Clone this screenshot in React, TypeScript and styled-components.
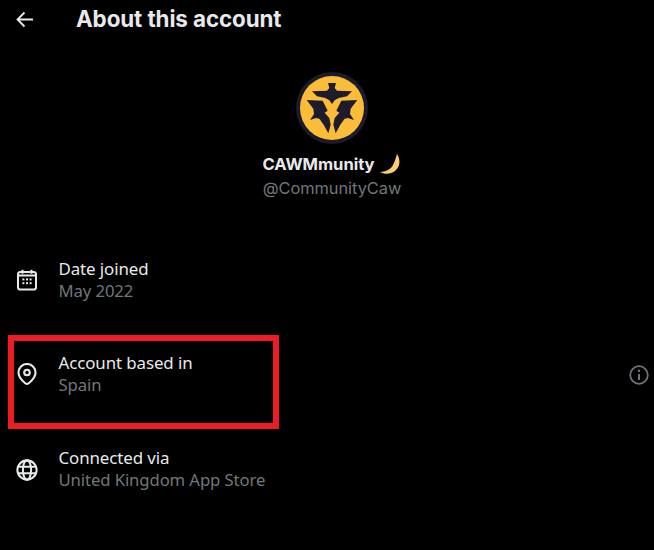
import React from "react";
import styled, { createGlobalStyle } from "styled-components";

const Global = createGlobalStyle`
  html, body { margin: 0; padding: 0; background: #000; }
  body { width: 654px; height: 550px; overflow: hidden; font-family: "Noto Sans", "Open Sans", sans-serif; }
`;
const Page = styled.div`
  width: 654px; height: 550px; background: #000; color: #e7e9ea; display: flex; flex-direction: column;
`;
const Header = styled.header`
  height: 38px; display: flex; align-items: center; padding-left: 15px; gap: 42px;
`;
const BackButton = styled.span`
  width: 19px; height: 19px; display: flex; color: #e7e9ea;
`;
const Title = styled.h1`
  margin: 0; font: 700 22.4px/38px Inter, sans-serif; color: #e7e9ea; letter-spacing: -0.1px;
`;
const Profile = styled.section`
  margin-top: 34px; display: flex; flex-direction: column; align-items: center; padding-left: 10px;
`;
const NameRow = styled.div`
  margin-top: 8px; height: 24px; display: flex; align-items: center; gap: 6px;
  font: 700 16.6px/24px Inter, sans-serif; color: #e7e9ea; letter-spacing: -0.05px;
`;
const Handle = styled.div`
  font: 400 16.4px/24px Inter, sans-serif; color: #71767b; letter-spacing: -0.05px;
`;
const List = styled.section`
  margin-top: 58px; display: flex; flex-direction: column;
`;
const Row = styled.div<{ $h: number }>`
  position: relative; height: ${p => p.$h}px; display: flex; align-items: flex-start; padding-left: 16px;
`;
const IconSlot = styled.span<{ $top: number }>`
  width: 22px; height: 22px; margin-top: ${p => p.$top}px; color: #e7e9ea; display: flex; flex: none;
`;
const Texts = styled.div<{ $top: number }>`
  margin-left: 20.5px; margin-top: ${p => p.$top}px; display: flex; flex-direction: column;
`;
const Label = styled.div`
  font: 400 16.9px/22px "Noto Sans", sans-serif; color: #e7e9ea; letter-spacing: -0.1px;
`;
const Value = styled.div`
  font: 400 16.7px/22px "Noto Sans", sans-serif; color: #71767b; letter-spacing: -0.1px;
`;
const Highlight = styled.div`
  position: absolute; left: 8px; top: -1px; width: 271px; height: 94px; box-sizing: border-box; border: 6px solid #ed1c24;
`;
const Info = styled.span`
  position: absolute; right: 5px; top: 29px; width: 20px; height: 20px; color: #71767b; display: flex;
`;

const Arrow = () => (
  <svg viewBox="0 0 19 19" width="19" height="19" fill="none" stroke="currentColor" strokeWidth="1.8">
    <path d="M18 9.5H2.5M9.5 2.5l-7 7 7 7" />
  </svg>
);
const birdWing = "M44 96L92 98L100 114L107 128L98 134L112 150L116 170L109 196L95 170L82 152L72 150L54 156L66 138L64 122Z";
const Avatar = () => (
  <svg viewBox="12 12 216 216" width="72" height="72">
    <circle cx="120" cy="120" r="108" fill="#1c1b2b" />
    <circle cx="120" cy="120" r="96" fill="#fbbd38" />
    <g fill="#1d1b2e">
      <path d="M108 45L132 45L128 60L135 68L180 70L165 85L140 90L128 97L120 108L112 97L100 90L75 85L60 70L105 68L112 60Z" />
      <path d={birdWing} />
      <path d={birdWing} transform="translate(240 0) scale(-1 1)" />
    </g>
  </svg>
);
const Moon = () => (
  <svg viewBox="0 0 21 21" width="21" height="21">
    <path d="M17 0C21 6 20 13 15 17C11 20 5 21 0 18C6 18 11 15 13 11C15 7 16 3 17 0Z" fill="#fbcf6a" />
  </svg>
);
const Calendar = () => (
  <svg viewBox="0 0 22 22" width="22" height="22" fill="none" stroke="currentColor" strokeWidth="2">
    <rect x="2" y="3" width="18" height="17.6" rx="2.4" />
    <path d="M6.5 0.8v4M15.500 0.8v4M2 6.500h18" />
    <g fill="currentColor" stroke="none">
      <rect x="6.400" y="9.400" width="2" height="2" /><rect x="10" y="9.400" width="2" height="2" /><rect x="13.600" y="9.400" width="2" height="2" />
      <rect x="6.400" y="13.200" width="2" height="2" /><rect x="10" y="13.200" width="2" height="2" /><rect x="13.600" y="13.200" width="2" height="2" />
    </g>
  </svg>
);
const Pin = () => (
  <svg viewBox="0 0 22 22" width="22" height="22" fill="none" stroke="currentColor" strokeWidth="2.1">
    <path d="M11 21c-1 0-8.500-5.500-8.500-11.500a8.500 8.500 0 0 1 17 0C19.500 15.500 12 21 11 21z" />
    <circle cx="11" cy="9.500" r="2.800" />
  </svg>
);
const Globe = () => (
  <svg viewBox="0 0 24 24" width="24" height="24" fill="none" stroke="currentColor" strokeWidth="2.2">
    <circle cx="12" cy="12" r="10.500" />
    <ellipse cx="12" cy="12" rx="4.500" ry="10.500" />
    <path d="M2 8.500h20M2 15.500h20" />
  </svg>
);
const InfoIcon = () => (
  <svg viewBox="0 0 20 20" width="20" height="20" fill="none" stroke="currentColor" strokeWidth="1.7">
    <circle cx="10" cy="10" r="8.800" />
    <path d="M10 9v6" strokeWidth="2" />
    <circle cx="10" cy="5.800" r="1.200" fill="currentColor" stroke="none" />
  </svg>
);

export default function App() {
  return (
    <Page>
      <Global />
      <Header>
        <BackButton><Arrow /></BackButton>
        <Title>About this account</Title>
      </Header>
      <Profile>
        <Avatar />
        <NameRow>CAWMmunity<Moon /></NameRow>
        <Handle>@CommunityCaw</Handle>
      </Profile>
      <List>
        <Row $h={78}>
          <IconSlot $top={11}><Calendar /></IconSlot>
          <Texts $top={0}><Label>Date joined</Label><Value>May 2022</Value></Texts>
        </Row>
        <Row $h={94}>
          <Highlight />
          <IconSlot $top={27}><Pin /></IconSlot>
          <Texts $top={16}><Label>Account based in</Label><Value>Spain</Value></Texts>
          <Info><InfoIcon /></Info>
        </Row>
        <Row $h={60}>
          <IconSlot $top={28}><Globe /></IconSlot>
          <Texts $top={17}><Label>Connected via</Label><Value>United Kingdom App Store</Value></Texts>
        </Row>
      </List>
    </Page>
  );
}
